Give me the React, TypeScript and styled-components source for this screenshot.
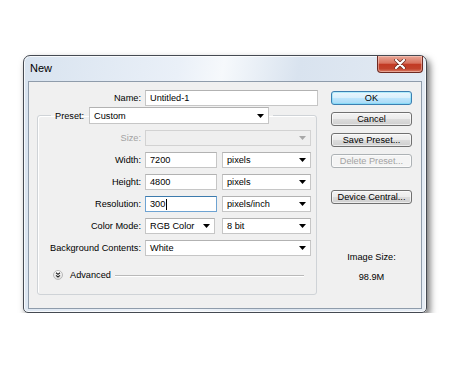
import React from "react";
import styled, { createGlobalStyle, css } from "styled-components";

const Global = createGlobalStyle`
  html, body { margin: 0; padding: 0; background: #ffffff; }
  body { font-family: "Liberation Sans", Arial, sans-serif; font-size: 9.2px; color: #000; }
  * { box-sizing: border-box; }
`;

const Window = styled.div`
  margin: 55px 0 0 23px;
  width: 404px;
  height: 258px;
  border: 1px solid #454a52;
  border-radius: 7px 7px 5px 5px;
  background: linear-gradient(100deg, #d8e3ef 0%, #eaf0f8 35%, #f6f9fc 45%, #d9e3ef 62%, #e6edf5 100%);
  box-shadow: inset 0 0 0 1px rgba(255, 255, 255, 0.75), 3px 4px 7px rgba(0, 0, 0, 0.55);
  display: flex;
  flex-direction: column;
`;

const TitleBar = styled.div`
  height: 25px;
  display: flex;
  justify-content: space-between;
  align-items: flex-start;
  padding-left: 6px;
  padding-right: 3px;
`;

const Title = styled.div`
  font-size: 11px;
  line-height: 13px;
  padding-top: 6px;
  color: #000;
`;

const CloseButton = styled.div`
  width: 46px;
  height: 17px;
  border: 1px solid #6d2a22;
  border-top: none;
  border-radius: 0 0 4px 4px;
  background: linear-gradient(#e8a595 0%, #d8725e 45%, #c23a24 52%, #c2432c 80%, #d9806a 100%);
  box-shadow: inset 0 0 0 1px rgba(255, 220, 210, 0.45);
  display: flex;
  align-items: center;
  justify-content: center;
`;

const Frame = styled.div`
  flex: 1;
  padding: 0 4px 3px 4px;
  display: flex;
`;

const Content = styled.div`
  flex: 1;
  background: #f0f0f0;
  border: 1px solid #8f9cab;
  display: flex;
  padding: 8px 0 0 8px;
`;

const LeftColumn = styled.div`
  width: 282px;
  display: flex;
  flex-direction: column;
`;

const RightColumn = styled.div`
  width: 81px;
  margin-left: 12px;
  padding-top: 1px;
  display: flex;
  flex-direction: column;
`;

const NameRow = styled.div`
  display: grid;
  grid-template-columns: 104px 173px;
  column-gap: 4px;
  height: 16px;
  align-items: center;
`;

const Label = styled.div<{ $disabled?: boolean }>`
  text-align: right;
  white-space: nowrap;
  line-height: 16px;
  color: ${(p) => (p.$disabled ? "#a3a3a3" : "#000")};
`;

const fieldBase = css`
  height: 16px;
  background: #ffffff;
  border: 1px solid #c6c6c6;
  border-top-color: #b2b2b2;
  padding: 0 4px;
  display: flex;
  align-items: center;
  line-height: 14px;
  white-space: nowrap;
`;

const TextField = styled.div<{ $focused?: boolean }>`
  ${fieldBase};
  ${(p) =>
    p.$focused &&
    css`
      border-color: #6ea3d2;
      border-top-color: #3d7bad;
    `}
`;

const SelectBox = styled.div<{ $disabled?: boolean; $tall?: boolean }>`
  ${fieldBase};
  justify-content: space-between;
  padding-right: 4px;
  height: ${(p) => (p.$tall ? "17px" : "16px")};
  ${(p) =>
    p.$disabled &&
    css`
      background: #efefef;
      border-color: #d2d2d2;
    `}
`;

const Caret = ({ color = "#000" }: { color?: string }) => (
  <svg width="7" height="4" viewBox="0 0 7 4">
    <path d="M0 0 H7 L3.5 4 Z" fill={color} />
  </svg>
);

const Select = ({
  value,
  disabled,
  tall,
}: {
  value?: string;
  disabled?: boolean;
  tall?: boolean;
}) => (
  <SelectBox $disabled={disabled} $tall={tall}>
    <span>{value}</span>
    <Caret color={disabled ? "#a8a8a8" : "#000"} />
  </SelectBox>
);

const GroupBox = styled.fieldset`
  width: 280px;
  margin: 1px 0 0 0;
  padding: 0 0 13px 0;
  border: 1px solid #cfd3d7;
  border-radius: 3px;
  box-shadow: inset 1px 1px 0 #ffffff;
  min-width: 0;
`;

const Legend = styled.legend`
  margin-left: 13px;
  padding: 0 4px;
`;

const LegendInner = styled.div`
  display: flex;
  align-items: center;
  gap: 5px;
`;

const LegendSelect = styled.div`
  width: 180px;
`;

const Rows = styled.div`
  padding-top: 6px;
  display: flex;
  flex-direction: column;
  gap: 6px;
`;

const FieldRow = styled.div`
  display: grid;
  grid-template-columns: 103px 166px;
  column-gap: 4px;
  height: 16px;
`;

const Pair = styled.div<{ $first?: number }>`
  display: grid;
  grid-template-columns: ${(p) => p.$first ?? 72}px 1fr;
  column-gap: ${(p) => 77 - (p.$first ?? 72)}px;
`;

const Cursor = styled.span`
  display: inline-block;
  width: 1px;
  height: 11px;
  background: #000;
  margin-left: 1px;
`;

const AdvancedRow = styled.div`
  margin-top: 13px;
  height: 12px;
  display: flex;
  align-items: center;
  padding: 0 12px 0 15px;
`;

const RoundToggle = styled.div`
  width: 10px;
  height: 10px;
  border-radius: 50%;
  border: 1px solid #b8b8b8;
  background: linear-gradient(#ffffff, #dcdcdc);
  display: flex;
  align-items: center;
  justify-content: center;
`;

const AdvancedText = styled.span`
  margin-left: 7px;
  line-height: 12px;
`;

const Rule = styled.div`
  flex: 1;
  height: 1px;
  margin-left: 4px;
  background: #b9b9b9;
  box-shadow: 0 1px 0 #ffffff;
`;

const Button = styled.div<{ $variant?: "default" | "disabled" }>`
  height: 14px;
  border: 1px solid #707070;
  border-radius: 3px;
  background: linear-gradient(#f3f3f3 0%, #ebebeb 48%, #dcdcdc 52%, #cfcfcf 100%);
  box-shadow: inset 0 0 0 1px rgba(255, 255, 255, 0.6);
  display: flex;
  align-items: center;
  justify-content: center;
  line-height: 12px;
  white-space: nowrap;
  color: #000;
  ${(p) =>
    p.$variant === "default" &&
    css`
      border-color: #3c7fb1;
      background: linear-gradient(#eaf6fd 0%, #d9f0fc 48%, #bee6fd 52%, #a7d9f5 100%);
      box-shadow: inset 0 0 0 1px #48dbfa55;
    `}
  ${(p) =>
    p.$variant === "disabled" &&
    css`
      border-color: #adb2b5;
      background: #f4f4f4;
      color: #a3a3a3;
    `}
`;

const ButtonStack = styled.div<{ $gap: number; $top?: number }>`
  display: flex;
  flex-direction: column;
  gap: ${(p) => p.$gap}px;
  margin-top: ${(p) => p.$top ?? 0}px;
`;

const InfoBlock = styled.div`
  margin-top: 47px;
  display: flex;
  flex-direction: column;
  align-items: center;
  gap: 8px;
  line-height: 12px;
`;

export default function App() {
  return (
    <>
      <Global />
      <Window>
        <TitleBar>
          <Title>New</Title>
          <CloseButton>
            <svg width="12" height="10" viewBox="0 0 12 10">
              <path d="M2 1 L10 9 M10 1 L2 9" stroke="#6b2a20" strokeWidth="3.6" strokeLinecap="round" />
              <path d="M2 1 L10 9 M10 1 L2 9" stroke="#ffffff" strokeWidth="2.2" strokeLinecap="round" />
            </svg>
          </CloseButton>
        </TitleBar>
        <Frame>
          <Content>
            <LeftColumn>
              <NameRow>
                <Label>Name:</Label>
                <TextField>Untitled-1</TextField>
              </NameRow>
              <GroupBox>
                <Legend>
                  <LegendInner>
                    <span>Preset:</span>
                    <LegendSelect>
                      <Select value="Custom" tall />
                    </LegendSelect>
                  </LegendInner>
                </Legend>
                <Rows>
                  <FieldRow>
                    <Label $disabled>Size:</Label>
                    <Select disabled />
                  </FieldRow>
                  <FieldRow>
                    <Label>Width:</Label>
                    <Pair>
                      <TextField>7200</TextField>
                      <Select value="pixels" />
                    </Pair>
                  </FieldRow>
                  <FieldRow>
                    <Label>Height:</Label>
                    <Pair>
                      <TextField>4800</TextField>
                      <Select value="pixels" />
                    </Pair>
                  </FieldRow>
                  <FieldRow>
                    <Label>Resolution:</Label>
                    <Pair>
                      <TextField $focused>
                        300
                        <Cursor />
                      </TextField>
                      <Select value="pixels/inch" />
                    </Pair>
                  </FieldRow>
                  <FieldRow>
                    <Label>Color Mode:</Label>
                    <Pair $first={70}>
                      <Select value="RGB Color" />
                      <Select value="8 bit" />
                    </Pair>
                  </FieldRow>
                  <FieldRow>
                    <Label>Background Contents:</Label>
                    <Select value="White" />
                  </FieldRow>
                </Rows>
                <AdvancedRow>
                  <RoundToggle>
                    <svg width="6" height="6" viewBox="0 0 6 6">
                      <path d="M1 0.8 L3 2.4 L5 0.8 M1 3.4 L3 5 L5 3.4" stroke="#222" strokeWidth="1.1" fill="none" />
                    </svg>
                  </RoundToggle>
                  <AdvancedText>Advanced</AdvancedText>
                  <Rule />
                </AdvancedRow>
              </GroupBox>
            </LeftColumn>
            <RightColumn>
              <ButtonStack $gap={7}>
                <Button $variant="default">OK</Button>
                <Button>Cancel</Button>
                <Button>Save Preset...</Button>
                <Button $variant="disabled">Delete Preset...</Button>
              </ButtonStack>
              <ButtonStack $gap={7} $top={22}>
                <Button>Device Central...</Button>
              </ButtonStack>
              <InfoBlock>
                <span>Image Size:</span>
                <span>98.9M</span>
              </InfoBlock>
            </RightColumn>
          </Content>
        </Frame>
      </Window>
    </>
  );
}
